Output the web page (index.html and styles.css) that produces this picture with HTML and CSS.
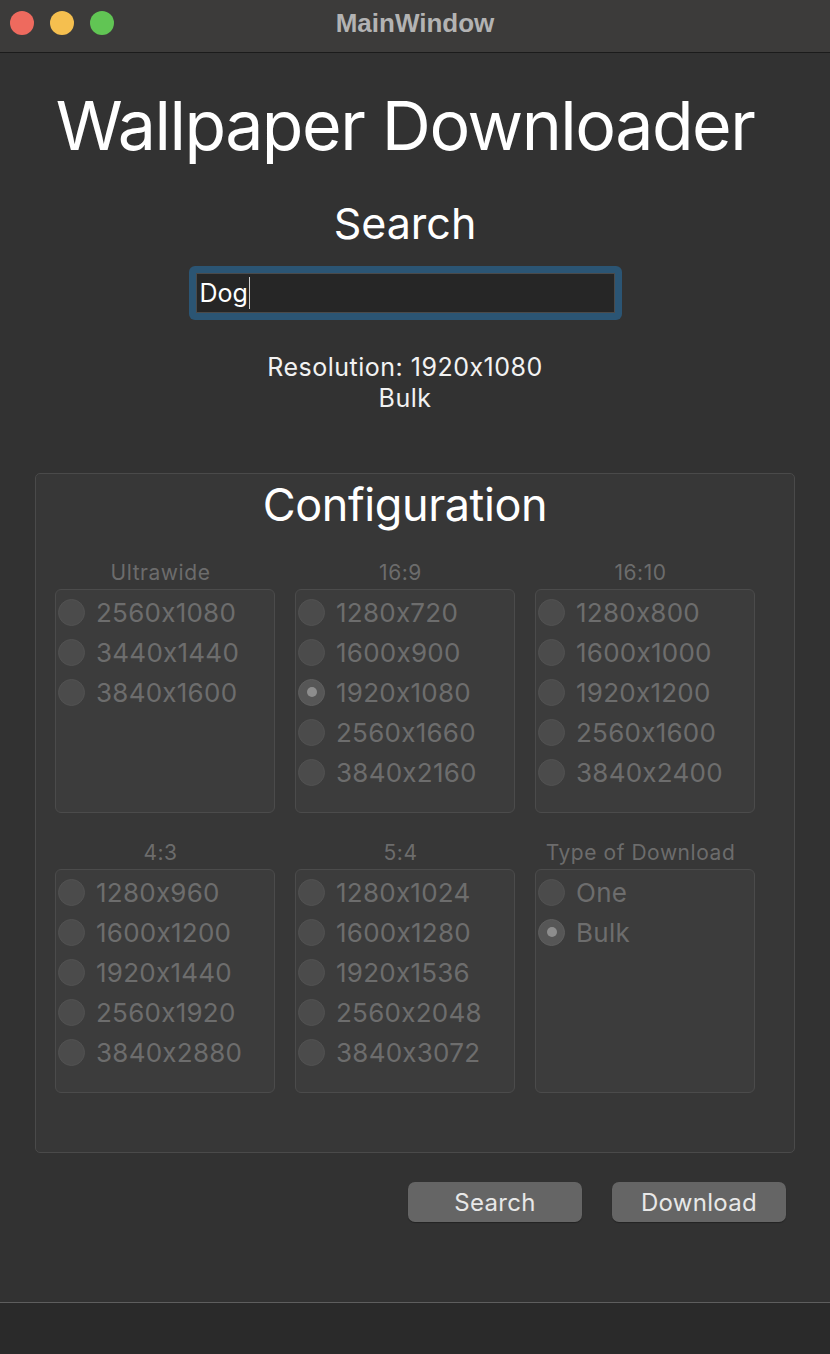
FILE: index.html
```html
<!DOCTYPE html>
<html lang="en">
<head>
<meta charset="utf-8">
<title>MainWindow</title>
<link rel="stylesheet" href="styles.css">
</head>
<body>
<div class="window">
  <header class="titlebar">
    <div class="lights">
      <span class="light red"></span>
      <span class="light yellow"></span>
      <span class="light green"></span>
    </div>
    <div class="wintitle">MainWindow</div>
    <div></div>
  </header>
  <main class="content">
    <div class="center-col">
      <h1 class="app-title">Wallpaper Downloader</h1>
      <h2 class="search-title">Search</h2>
      <div class="search-ring">
        <div class="search-field"><span class="typed">Dog</span><span class="caret"></span></div>
      </div>
      <div class="status">
        <div>Resolution: 1920x1080</div>
        <div>Bulk</div>
      </div>
    </div>
    <section class="config">
      <h2 class="config-title">Configuration</h2>
      <div class="groups">
        <div class="group">
          <div class="group-label">Ultrawide</div>
          <div class="group-box">
            <div class="radio"><span class="dot"></span>2560x1080</div>
            <div class="radio"><span class="dot"></span>3440x1440</div>
            <div class="radio"><span class="dot"></span>3840x1600</div>
          </div>
        </div>
        <div class="group">
          <div class="group-label">16:9</div>
          <div class="group-box">
            <div class="radio"><span class="dot"></span>1280x720</div>
            <div class="radio"><span class="dot"></span>1600x900</div>
            <div class="radio checked"><span class="dot"></span>1920x1080</div>
            <div class="radio"><span class="dot"></span>2560x1660</div>
            <div class="radio"><span class="dot"></span>3840x2160</div>
          </div>
        </div>
        <div class="group">
          <div class="group-label">16:10</div>
          <div class="group-box">
            <div class="radio"><span class="dot"></span>1280x800</div>
            <div class="radio"><span class="dot"></span>1600x1000</div>
            <div class="radio"><span class="dot"></span>1920x1200</div>
            <div class="radio"><span class="dot"></span>2560x1600</div>
            <div class="radio"><span class="dot"></span>3840x2400</div>
          </div>
        </div>
        <div class="group">
          <div class="group-label">4:3</div>
          <div class="group-box">
            <div class="radio"><span class="dot"></span>1280x960</div>
            <div class="radio"><span class="dot"></span>1600x1200</div>
            <div class="radio"><span class="dot"></span>1920x1440</div>
            <div class="radio"><span class="dot"></span>2560x1920</div>
            <div class="radio"><span class="dot"></span>3840x2880</div>
          </div>
        </div>
        <div class="group">
          <div class="group-label">5:4</div>
          <div class="group-box">
            <div class="radio"><span class="dot"></span>1280x1024</div>
            <div class="radio"><span class="dot"></span>1600x1280</div>
            <div class="radio"><span class="dot"></span>1920x1536</div>
            <div class="radio"><span class="dot"></span>2560x2048</div>
            <div class="radio"><span class="dot"></span>3840x3072</div>
          </div>
        </div>
        <div class="group">
          <div class="group-label">Type of Download</div>
          <div class="group-box">
            <div class="radio"><span class="dot"></span>One</div>
            <div class="radio checked"><span class="dot"></span>Bulk</div>
          </div>
        </div>
      </div>
    </section>
    <div class="actions">
      <button class="btn">Search</button>
      <button class="btn">Download</button>
    </div>
  </main>
  <footer class="statusbar"></footer>
</div>
</body>
</html>
```

FILE: styles.css
```css
html, body {
  margin: 0;
  padding: 0;
}
body {
  background: #323232;
  font-family: Inter, "Noto Sans", "Liberation Sans", sans-serif;
  font-feature-settings: "calt" 0;
  color: #ffffff;
}
.window {
  width: 830px;
  height: 1354px;
  display: flex;
  flex-direction: column;
  overflow: hidden;
}
.titlebar {
  height: 52px;
  flex: none;
  background: #3c3b3a;
  border-bottom: 1px solid #1b1b1b;
  display: grid;
  grid-template-columns: 1fr auto 1fr;
  align-items: center;
}
.lights {
  display: flex;
  gap: 16px;
  padding-left: 10px;
  margin-top: -6px;
}
.light {
  width: 24px;
  height: 24px;
  border-radius: 50%;
  display: block;
}
.red { background: #ee6a5e; }
.yellow { background: #f5bf4f; }
.green { background: #61c554; }
.wintitle {
  font-family: "Liberation Sans", Arial, sans-serif;
  font-weight: 700;
  font-size: 26px;
  color: #b3b3b3;
  margin-top: -6px;
}
.content {
  flex: 1;
  display: flex;
  flex-direction: column;
}
.center-col {
  width: 810px;
  display: flex;
  flex-direction: column;
  align-items: center;
  text-align: center;
}
.app-title {
  margin: 38px 0 0;
  font-size: 68px;
  line-height: 69px;
  font-weight: 400;
  letter-spacing: -1.5px;
}
.search-title {
  margin: 42px 0 0;
  font-size: 43px;
  line-height: 43px;
  font-weight: 400;
}
.search-ring {
  margin-top: 21px;
  padding: 7px;
  background: #2b5574;
  border-radius: 6px;
}
.search-field {
  width: 419px;
  height: 40px;
  box-sizing: border-box;
  background: #262626;
  border: 1px solid #4a4a4a;
  display: flex;
  align-items: center;
  padding-left: 3px;
  font-size: 25px;
}
.typed {
  color: #ffffff;
}
.caret {
  width: 1px;
  height: 32px;
  background: #d0d0d0;
  margin-left: 1px;
}
.status {
  margin-top: 32px;
  font-size: 25px;
  line-height: 31px;
  letter-spacing: 0.5px;
  color: #f2f2f2;
}
.config {
  margin: 59px 0 0 35px;
  width: 760px;
  height: 680px;
  box-sizing: border-box;
  border: 1px solid #4a4a4a;
  border-radius: 5px;
  background: #373737;
  padding: 8px 19px 0;
}
.config-title {
  margin: 0;
  padding-right: 20px;
  text-align: center;
  font-size: 45px;
  line-height: 45px;
  font-weight: 400;
  letter-spacing: -0.4px;
}
.groups {
  margin-top: 34px;
  display: grid;
  grid-template-columns: repeat(3, 220px);
  column-gap: 20px;
  row-gap: 28px;
}
.group-label {
  text-align: center;
  font-size: 21px;
  line-height: 24px;
  letter-spacing: 0.55px;
  color: #6c6c6c;
  padding-right: 9px;
}
.group-box {
  margin-top: 4px;
  height: 224px;
  box-sizing: border-box;
  border: 1px solid #4b4b4b;
  border-radius: 6px;
  background: #3c3c3c;
  padding: 2px 2px 0;
}
.radio {
  height: 40px;
  display: flex;
  align-items: center;
  gap: 11px;
  font-size: 26px;
  letter-spacing: 0.25px;
  color: #6d6d6d;
}
.dot {
  width: 27px;
  height: 27px;
  flex: none;
  box-sizing: border-box;
  border-radius: 50%;
  background: #4b4b4b;
  border: 1px solid #525252;
  display: flex;
  align-items: center;
  justify-content: center;
}
.radio.checked .dot {
  background: #565656;
  border-color: #5e5e5e;
}
.radio.checked .dot::after {
  content: "";
  width: 10px;
  height: 10px;
  border-radius: 50%;
  background: #8d8d8d;
}
.actions {
  margin-top: 29px;
  display: flex;
  justify-content: flex-end;
  gap: 30px;
  padding-right: 44px;
}
.btn {
  width: 174px;
  height: 40px;
  border: none;
  border-radius: 7px;
  background: #656565;
  color: #e8e8e8;
  font-family: Inter, "Noto Sans", "Liberation Sans", sans-serif;
  font-feature-settings: "calt" 0;
  font-size: 24px;
  letter-spacing: 0.3px;
  padding: 0;
  box-shadow: 0 1px 1px rgba(0,0,0,0.3);
}
.statusbar {
  flex: none;
  height: 51px;
  border-top: 1px solid #5e5e5e;
  background: #2a2a2a;
}
```
